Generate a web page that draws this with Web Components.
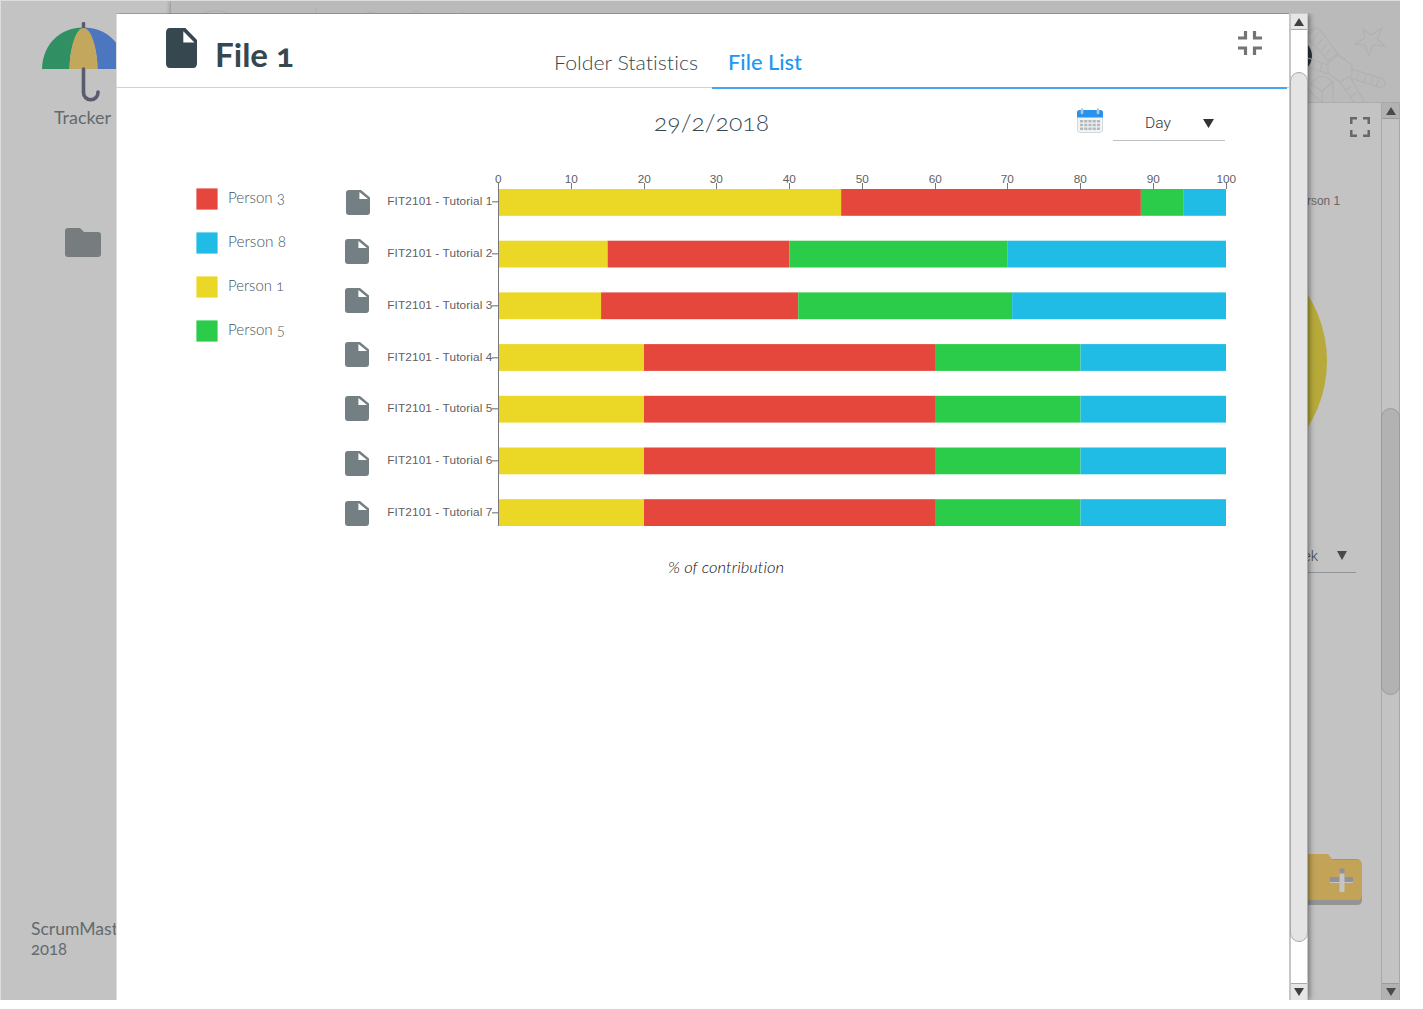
<!DOCTYPE html>
<html lang="en">
<head>
<meta charset="utf-8">
<title>Tracker</title>
<style>
html,body{margin:0;background:#fff;overflow:hidden}
body{font-family:Lato,"Open Sans",sans-serif;font-variant-numeric:oldstyle-nums;font-variant-ligatures:none}
</style>
</head>
<body>
<tracker-app></tracker-app>
<script>
const define=(name,html,ready)=>customElements.define(name,class extends HTMLElement{
  connectedCallback(){
    if(this.shadowRoot)return;
    const t=document.createElement('template');
    t.innerHTML=typeof html==='function'?html(this):html;
    this.attachShadow({mode:'open'}).append(t.content.cloneNode(true));
    if(ready)ready(this);
  }
});

/* Label whose glyphs are widened so that it spans the given width */
define('fit-text',`<style>:host{display:block;white-space:nowrap}span{display:inline-block;white-space:pre;transform-origin:0 50%}</style><span><slot></slot></span>`,el=>{
  const s=el.shadowRoot.querySelector('span'),w=+el.getAttribute('w');
  const now=s.getBoundingClientRect().width;
  el.style.width=w+'px';
  s.style.transform=`scaleX(${w/now})`;
});

define('file-icon',`<style>:host{display:block;width:24px;height:25px;color:#747f84}svg{display:block;width:100%;height:100%}</style>
<svg viewBox="0 0 24 25" preserveAspectRatio="none"><path fill="currentColor" fill-rule="evenodd" d="M3 0H15L24 7.500V22Q24 25 21 25H3Q0 25 0 22V3Q0 0 3 0ZM13.400 2V9H22Z"/></svg>`);

define('scroll-bar',el=>{
  const top=el.getAttribute('top'),h=el.getAttribute('size'),dim=el.hasAttribute('dim');
  const c=dim?{t:'#c3c3c3',e:'#a8a8a8',b:'#b2b2b2',th:'#b2b2b2',l:'#9b9b9b',a:'#4a4a4a'}:{t:'#fff',e:'#c6c6c6',b:'#e6e6e6',th:'#e4e4e4',l:'#aaa',a:'#404040'};
  return `<style>:host{display:flex;flex-direction:column;width:19px;box-sizing:border-box;background:${c.t};border:1px solid ${c.e};border-left-width:${dim?1:2}px;border-bottom:0;flex:none}
  .b{height:15px;flex:none;background:${c.b};border-bottom:1px solid ${c.l};display:flex;align-items:center;justify-content:center}
  .b.d{border-bottom:0;border-top:1px solid ${c.l};padding-bottom:1px;height:15px}
  .track{flex:1;padding-top:${top}px}
  .thumb{height:${h}px;box-sizing:border-box;margin:0 -1px;border:1px solid ${c.l};border-radius:10px;background:${c.th}}
  svg{display:block}</style>
  <div class="b"><svg width="10" height="8"><path d="M5 0L10 8H0Z" fill="${c.a}"/></svg></div>
  <div class="track"><div class="thumb"></div></div>
  <div class="b d"><svg width="10" height="8"><path d="M0 0H10L5 8Z" fill="${c.a}"/></svg></div>`;
});

define('side-bar',`<style>
:host{display:flex;flex-direction:column;width:171px;box-sizing:border-box;background:#c3c3c3;color:#626a6d;padding:22px 0 0;flex:none;font-weight:400}
.logo{margin-left:42px;display:block}
.name{margin:3px 0 0 54px;font-size:17px;line-height:24px}
.folder{display:block;margin:98px 0 0 65px}
.foot{margin:auto 0 41px 31px;font-size:17px;line-height:20px}
</style>
<svg class="logo" width="84" height="81" viewBox="0 0 84 81">
<path d="M41.500 1.500V8" stroke="#5b5b6f" stroke-width="3.400" stroke-linecap="round"/>
<path d="M0 47C1 20 20 5.500 41 5.500Q28 18 27.500 47Z" fill="#309063"/>
<path d="M83 47C82 20 63 5.500 42 5.500Q55 18 55.500 47Z" fill="#4c76bf"/>
<path d="M27.500 47C28 24 34 6 41.500 6S55 24 55.500 47Z" fill="#c2a75c"/>
<path d="M41.500 47V70.500A7.200 7.200 0 0 0 56 70.500V70" fill="none" stroke="#5b5b6f" stroke-width="3.600" stroke-linecap="round"/>
</svg>
<fit-text class="name" w="57">Tracker</fit-text>
<svg class="folder" width="36" height="29"><path d="M3 0H15L19 4H33Q36 4 36 7V26Q36 29 33 29H3Q0 29 0 26V3Q0 0 3 0Z" fill="#777d7f"/></svg>
<div class="foot"><fit-text w="87">ScrumMast</fit-text><fit-text w="36">2018</fit-text></div>`);

define('top-bar',`<style>
:host{display:flex;height:103px;box-sizing:border-box;background:#bababa;border-bottom:1px solid #adadad;justify-content:flex-end;flex:none;overflow:hidden}
svg{display:block;flex:none}
</style>
<svg width="1229" height="103" viewBox="171 0 1229 103" fill="none" stroke="#b1b1b1" stroke-width="1.100">
<path d="M200 15Q216 6 232 15M316 8V15M364 15Q371 9 376 15M410 15Q416 6 422 15M462 12L466 15M480 15L484 12" stroke="#b1b1b1" stroke-width="1"/>
<circle cx="1295" cy="56" r="17" fill="#29363d" stroke="none"/>
<path d="M1363 29L1371 35L1382 28L1377 39L1385 46L1373 45L1369 56L1365 45L1355 44L1365 38Z"/>
<path d="M1308 34Q1312 24 1320 30L1338 54Q1334 61 1328 61L1308 38M1314 29L1308 36M1319 33L1313 40M1323 39L1317 45M1327 44L1321 51M1331 49L1325 56"/>
<path d="M1337 54L1352 65L1352 75L1340 82L1328 73L1328 61Z"/>
<path d="M1352 69L1383 79Q1388 85 1381 88L1351 78M1359 71L1357 80M1366 74L1364 83M1373 76L1371 85M1379 78L1376 87"/>
<path d="M1308 58L1328 65M1308 67L1328 74M1315 60L1313 69M1322 63L1320 72M1350 77L1365 103M1340 82L1354 103M1351 87L1345 90M1356 93L1350 97M1311 84Q1321 70 1333 82V103M1311 84L1322 91V103M1308 89L1322 103M1333 82L1322 91"/>
</svg>`);

define('work-area',`<style>
:host{display:flex;flex:1;min-height:0;background:#c3c3c3}
.col{flex:1;display:flex;flex-direction:column;align-items:flex-end;overflow:hidden}
.exp{display:block;margin:14px 11px 0 0;flex:none}
.p{margin:57px 41px 0 0;font:12px/14px "Liberation Sans",sans-serif;color:#666}
.pie{width:248px;height:248px;border-radius:50%;background:#b7aa3b;margin:29px 54px 0 0;flex:none}
.sel{display:flex;align-items:center;justify-content:flex-end;box-sizing:border-box;width:112px;height:34px;border-bottom:1px solid #8f9599;margin:54px 25px 0 0;padding:0 9px 0 0;gap:19px;font:300 15px/20px Roboto,sans-serif;color:#484848;flex:none}
.add{display:block;margin:281px 19px 0 0;flex:none}
scroll-bar{margin-top:-1px}
</style>
<div class="col">
<svg class="exp" width="20" height="20"><path d="M1.250 7V1.250H7M13 1.250H18.750V7M18.750 13V18.750H13M7 18.750H1.250V13" fill="none" stroke="#686868" stroke-width="2.500"/></svg>
<fit-text class="p" w="33">rson 1</fit-text>
<div class="pie"></div>
<div class="sel"><fit-text w="15">ek</fit-text><svg width="10" height="9"><path d="M0 0H10L5 9Z" fill="#484848"/></svg></div>
<svg class="add" width="62" height="51"><path d="M0 5H57Q62 5 62 15V46Q62 51 57 51H0Z" fill="#949494"/><path d="M0 0H28L33 6H57Q62 6 62 11V41Q62 46 57 46H0Z" fill="#c2a358"/><path d="M39.500 14.500H44.500V23H53V28H30V23H39.500Z" fill="#929292"/><path d="M39.500 19.500H44.500V28H53V29H44.500V38H39.500V29H30V28H39.500Z" fill="#c5c5c5"/></svg>
</div>
<scroll-bar dim top="289" size="287"></scroll-bar>`);

define('modal-header',`<style>
:host{display:flex;height:73px;border-bottom:1px solid #cfd2d3;color:#36474f;flex:none}
file-icon{color:#36474f;width:31px;height:40px;margin:14px 0 0 50px;flex:none}
h1{margin:23px 0 0 17.500px;width:81.500px;font-size:31.500px;line-height:36px;font-weight:700;flex:none}
.tab{height:74px;box-sizing:border-box;padding-top:35px;font-size:20.500px;line-height:26px;font-weight:300;flex:none}
.one{margin-left:258px;width:158px}
.two{width:575px;border-bottom:2px solid #4aa5ee;padding-left:16px;color:#2196f3;font-weight:500;display:flex;justify-content:space-between;height:75px}
svg{display:block;margin:-18px 25px 0 0}
</style>
<file-icon></file-icon><h1><fit-text w="79">File 1</fit-text></h1>
<div class="tab one"><fit-text w="144">Folder Statistics</fit-text></div>
<div class="tab two"><fit-text w="74">File List</fit-text>
<svg width="24" height="24"><path d="M7.500 0V7H0M16.500 0V7H24M7.500 24V17H0M16.500 24V17H24" fill="none" stroke="#747474" stroke-width="3.200"/></svg></div>`);

define('modal-toolbar',`<style>
:host{display:flex;height:54px;margin-left:538px;flex:none}
.date{width:423px;padding-top:19px;font-size:23px;line-height:30px;font-weight:300;color:#36474f}
.cal{display:block;margin-top:20px}
.sel{display:flex;align-items:center;box-sizing:border-box;width:112px;height:36px;margin:17px 0 0 10px;border-bottom:1px solid #bcc1c3;padding-left:32px;font:300 15px/20px Roboto,sans-serif;color:#333}
.sel svg{margin:2px 0 0 32px}
</style>
<div class="date"><fit-text w="115">29/2/2018</fit-text></div>
<svg class="cal" width="26" height="26"><rect x=".5" y="3" width="25" height="21.500" rx="2.500" fill="#f1f3f4" stroke="#d3dadd"/><path d="M0 9.500V4.500Q0 2 2.500 2H23.500Q26 2 26 4.500V9.500Z" fill="#2793ee"/><path d="M5 1.500V5M21 1.500V5" stroke="#b5c8d2" stroke-width="2.600" stroke-linecap="round"/><path d="M3 13.200H23M3 17H23M3 20.800H23" stroke="#b3babd" stroke-width="2.600" stroke-dasharray="3.200 1"/></svg>
<div class="sel"><fit-text w="26">Day</fit-text><svg width="11" height="9"><path d="M0 0H11L5.500 9Z" fill="#333"/></svg></div>`);

define('chart-legend',()=>{
  const items=[['Person 3','#e5473d',57],['Person 8','#20bce5',58],['Person 1','#ebd726',56],['Person 5','#2ccc4b',57]];
  return `<style>:host{display:flex;flex-direction:column;width:149px;padding-top:46px;gap:22px;font-weight:300;font-size:15px;line-height:20px;color:#46545b;flex:none}
  .i{display:flex;height:22px;gap:10px}svg{display:block}fit-text{margin-top:-1px}</style>`+
  items.map(i=>`<div class="i"><svg width="22" height="22"><rect x=".4" y=".4" width="21.200" height="21.200" fill="${i[1]}"/></svg><fit-text w="${i[2]}">${i[0]}</fit-text></div>`).join('');
});

define('file-icons',()=>`<style>:host{display:flex;flex-direction:column;width:42px;padding-top:48px;flex:none}</style>`+
  [0,24,24,29,29,30,25].map((g,i)=>`<file-icon style="margin-top:${g}px;margin-left:${i?0:1}px"></file-icon>`).join(''));

/* Horizontal stacked bars: one row per file, values in percent */
define('contribution-chart',()=>{
  const rows=[[47.1,41.2,5.9,5.8],[15,25,30,30],[14.1,27.1,29.4,29.4],[20,40,20,20],[20,40,20,20],[20,40,20,20],[20,40,20,20]];
  const col=['#ebd726','#e5473d','#2ccc4b','#20bce5'],X=111.5,k=7.275;
  let s='';
  rows.forEach((r,i)=>{
    const y=47+i*51.7,ty=[0,52,104,156,207,259,311][i];let x=X;
    r.forEach((v,j)=>{s+=`<rect x="${x.toFixed(2)}" y="${y.toFixed(2)}" width="${(v*k).toFixed(2)}" height="26.800" fill="${col[j]}"/>`;x+=v*k;});
    s+=`<rect x="105" y="${59+ty}" width="6" height="1.500" fill="#999"/><text x="105.300" y="${63+ty}" text-anchor="end" textLength="105">FIT2101 - Tutorial ${i+1}</text>`;
  });
  for(let i=0;i<=10;i++){const x=Math.round(111+i*10*k);
    s+=`<text x="${x+.3}" y="41" text-anchor="middle">${i*10}</text><rect x="${x}" y="41" width="1" height="6" fill="#777"/>`;}
  return `<style>:host{display:block}svg{display:block}text{font:11.800px "Liberation Sans",sans-serif;fill:#5f5f5f;font-variant-numeric:normal}
  .cap{margin:27px 0 0 281px;font-size:16.500px;line-height:26px;font-style:italic;font-weight:300;color:#101010}</style>
  <svg width="860" height="385">${s}<rect x="111" y="42" width="1" height="342" fill="#777"/></svg>
  <fit-text class="cap" w="116">% of contribution</fit-text>`;
});

define('file-modal',`<style>
:host{display:flex;width:1192px;height:986px;background:#fff;box-shadow:1px 0 6px rgba(0,0,0,.5)}
.m{flex:1;display:flex;flex-direction:column;min-width:0;box-shadow:inset 1px 0 #ddd}
.body{display:flex;padding-left:80px}
scroll-bar{height:987px;margin-top:-1px}
</style>
<div class="m"><modal-header></modal-header><modal-toolbar></modal-toolbar>
<div class="body"><chart-legend></chart-legend><file-icons></file-icons><contribution-chart></contribution-chart></div></div>
<scroll-bar top="42" size="870"></scroll-bar>`);

define('tracker-app',`<style>
:host{display:flex;position:relative;width:1400px;height:1000px;overflow:hidden}
.main{flex:1;display:flex;flex-direction:column;min-width:0;box-shadow:0 0 5px rgba(0,0,0,.4)}
:host::before{content:"";position:absolute;inset:0;border:solid #ddd;border-width:1px 0 0 1px;z-index:1;pointer-events:none}
file-modal{position:absolute;left:116px;top:14px;z-index:2;clip-path:inset(-1px -12px 0 0)}
</style>
<side-bar></side-bar><div class="main"><top-bar></top-bar><work-area></work-area></div>
<file-modal></file-modal>`);
</script>
</body>
</html>
